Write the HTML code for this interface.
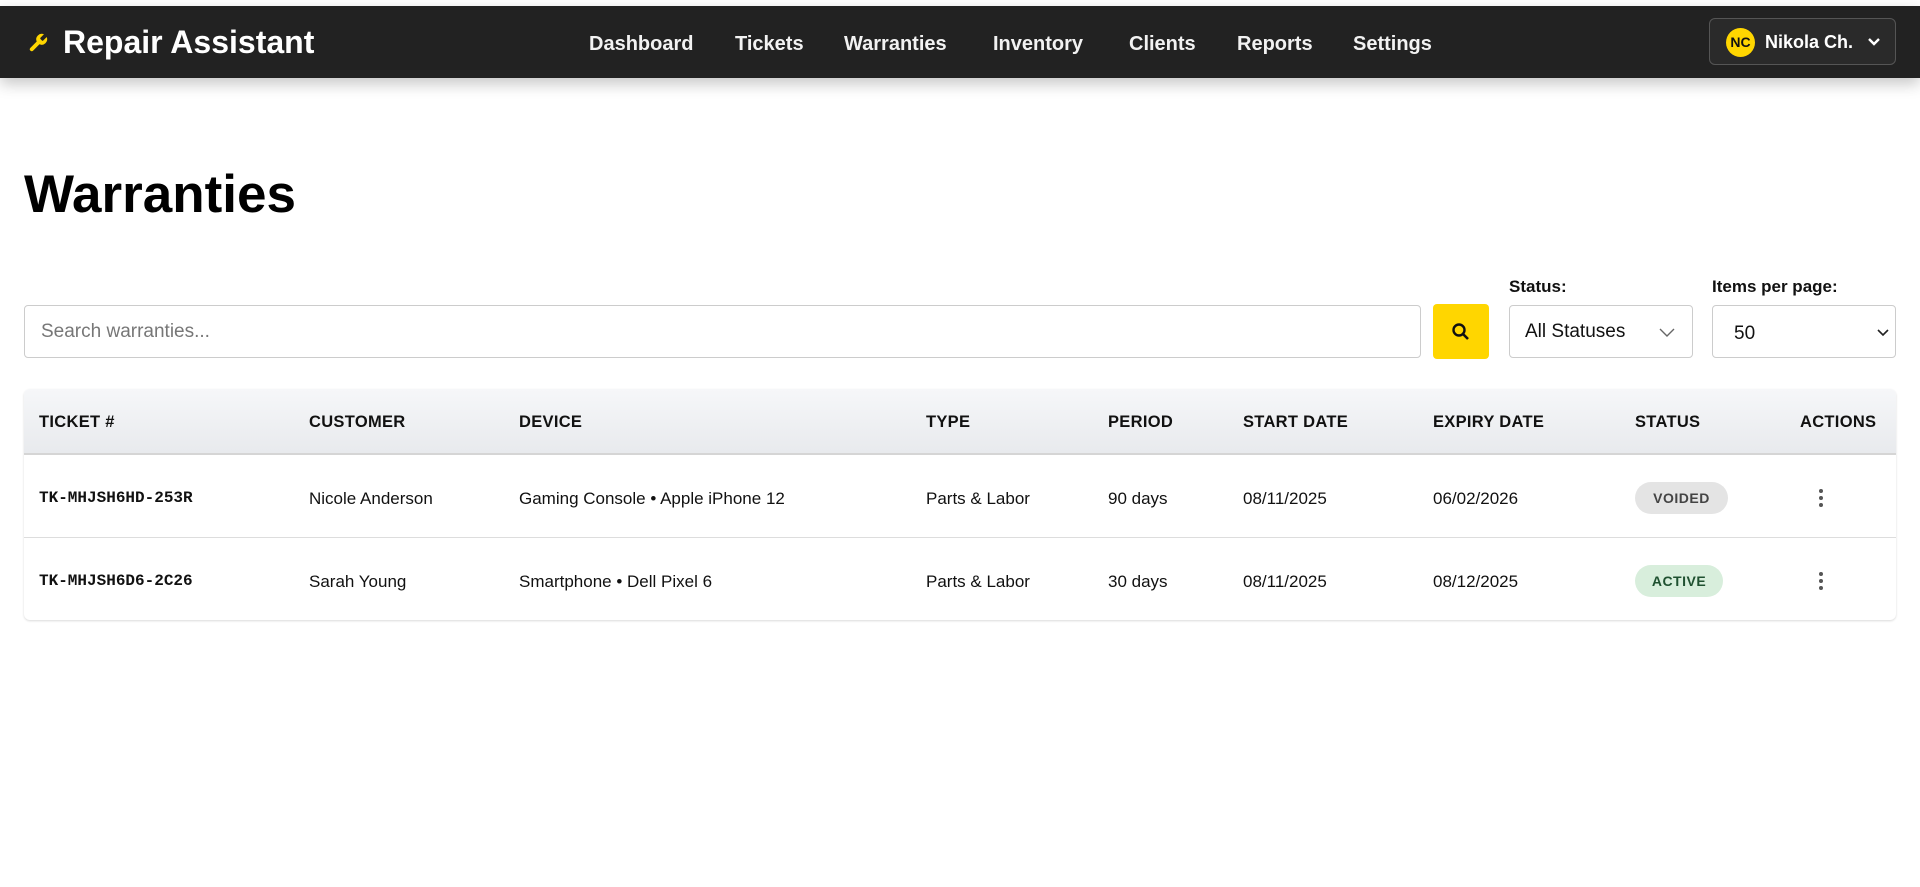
<!DOCTYPE html>
<html><head><meta charset="utf-8"><style>
*{box-sizing:border-box;margin:0;padding:0}
body{width:1920px;height:887px;background:#fff;font-family:"Liberation Sans",sans-serif;color:#111;position:relative;overflow:hidden}
.nav{position:absolute;top:6px;left:0;width:1920px;height:72px;background:#222;box-shadow:0 6px 14px rgba(0,0,0,.22)}
.logo{position:absolute;left:27px;top:18px;color:#fff;font-weight:bold;font-size:32px;display:flex;align-items:center;gap:14px}
.links a{position:absolute;top:27px;color:#f2f2f2;font-weight:bold;font-size:20px;text-decoration:none}
.user{position:absolute;left:1709px;top:12px;width:187px;height:47px;border:1px solid #555;border-radius:6px;background:#2a2a2a;color:#fff;font-weight:bold;font-size:18px}
.av{position:absolute;left:16px;top:9px;width:29px;height:29px;border-radius:50%;background:#ffd600;color:#111;font-size:14px;text-align:center;line-height:29px}
h1{position:absolute;left:24px;top:164px;font-size:53px;font-weight:bold;color:#000}
.inp{position:absolute;top:305px;height:53px;border:1px solid #ccc;border-radius:4px;background:#fff;font-size:19px}
.lbl{position:absolute;top:277px;font-weight:bold;font-size:17px}
.tbl{position:absolute;left:24px;top:389px;width:1872px;height:231px;border-radius:6px;box-shadow:0 1px 2px rgba(0,0,0,.15);overflow:hidden}
.hd{position:absolute;left:0;top:0;width:100%;height:66px;background:linear-gradient(#f6f7f9,#e8eaed);border-bottom:2px solid #d5d5d5}
.row{position:absolute;left:0;width:100%;height:83px;border-bottom:1px solid #ddd}
.c{position:absolute;font-size:17px;white-space:nowrap}
.hd .c{top:24px;font-weight:bold;font-size:16.5px;letter-spacing:.3px}
.row .c{top:34px}
.mono{font-family:"Liberation Mono",monospace;font-weight:bold;font-size:16px!important}
.badge{position:absolute;top:27px;height:32px;border-radius:16px;font-weight:bold;font-size:14px;text-align:center;line-height:32px;letter-spacing:.5px}
.dots{position:absolute;left:1795px;top:34px;width:4px}
.dots i{display:block;width:4px;height:4px;border-radius:50%;background:#555;margin-bottom:3px}
</style></head><body>
<div class="nav">
<div class="logo"><svg width="22" height="24" viewBox="0 0 24 24"><path d="M14.7 6.3a1 1 0 0 0 0 1.4l1.6 1.6a1 1 0 0 0 1.4 0l3.8-3.8a6 6 0 0 1-7.9 7.9l-6.9 6.9a2.1 2.1 0 0 1-3-3l6.9-6.9a6 6 0 0 1 7.9-7.9z" fill="#ffd600"/></svg>Repair Assistant</div>
<div class="links">
<a style="left:589px">Dashboard</a><a style="left:735px">Tickets</a><a style="left:844px">Warranties</a><a style="left:993px">Inventory</a><a style="left:1129px">Clients</a><a style="left:1237px">Reports</a><a style="left:1353px">Settings</a></div>
<div class="user"><div class="av">NC</div><span style="position:absolute;left:55px;top:13px">Nikola Ch.</span>
<svg style="position:absolute;left:157px;top:17px" width="14" height="12" viewBox="0 0 14 12"><path d="M2 3l5 5 5-5" stroke="#fff" stroke-width="2.4" fill="none"/></svg></div>
</div>
<h1>Warranties</h1>
<div class="inp" style="left:24px;width:1397px"><span style="position:absolute;left:16px;top:15px;color:#777">Search warranties...</span></div>
<div style="position:absolute;left:1433px;top:304px;width:56px;height:55px;background:#ffd600;border-radius:4px">
<svg style="position:absolute;left:18px;top:18px" width="20" height="20" viewBox="0 0 20 20"><circle cx="8" cy="8" r="5.5" stroke="#111" stroke-width="2.4" fill="none"/><path d="M12 12l5 5" stroke="#111" stroke-width="2.6"/></svg></div>
<div class="lbl" style="left:1509px">Status:</div>
<div class="lbl" style="left:1712px">Items per page:</div>
<div class="inp" style="left:1509px;width:184px"><span style="position:absolute;left:15px;top:15px">All Statuses</span>
<svg style="position:absolute;left:148px;top:20px" width="18" height="12" viewBox="0 0 18 12"><path d="M2 3l7 7 7-7" stroke="#666" stroke-width="1.4" fill="none"/></svg></div>
<div class="inp" style="left:1712px;width:184px"><span style="position:absolute;left:21px;top:17px">50</span>
<svg style="position:absolute;left:164px;top:23px" width="12" height="8" viewBox="0 0 12 8"><path d="M1 1l5 5 5-5" stroke="#222" stroke-width="1.6" fill="none"/></svg></div>
<div class="tbl">
<div class="hd"><span class="c" style="left:15px">TICKET #</span><span class="c" style="left:285px">CUSTOMER</span><span class="c" style="left:495px">DEVICE</span><span class="c" style="left:902px">TYPE</span><span class="c" style="left:1084px">PERIOD</span><span class="c" style="left:1219px">START DATE</span><span class="c" style="left:1409px">EXPIRY DATE</span><span class="c" style="left:1611px">STATUS</span><span class="c" style="left:1776px">ACTIONS</span></div>
<div class="row" style="top:66px"><span class="c mono" style="left:15px">TK-MHJSH6HD-253R</span><span class="c" style="left:285px">Nicole Anderson</span><span class="c" style="left:495px">Gaming Console • Apple iPhone 12</span><span class="c" style="left:902px">Parts &amp; Labor</span><span class="c" style="left:1084px">90 days</span><span class="c" style="left:1219px">08/11/2025</span><span class="c" style="left:1409px">06/02/2026</span><span class="badge" style="left:1611px;width:93px;background:#e4e4e4;color:#444">VOIDED</span><div class="dots"><i></i><i></i><i></i></div></div>
<div class="row" style="top:149px;border-bottom:none"><span class="c mono" style="left:15px">TK-MHJSH6D6-2C26</span><span class="c" style="left:285px">Sarah Young</span><span class="c" style="left:495px">Smartphone • Dell Pixel 6</span><span class="c" style="left:902px">Parts &amp; Labor</span><span class="c" style="left:1084px">30 days</span><span class="c" style="left:1219px">08/11/2025</span><span class="c" style="left:1409px">08/12/2025</span><span class="badge" style="left:1611px;width:88px;background:#d8eedc;color:#1f5130">ACTIVE</span><div class="dots"><i></i><i></i><i></i></div></div>
</div>
</body></html>
